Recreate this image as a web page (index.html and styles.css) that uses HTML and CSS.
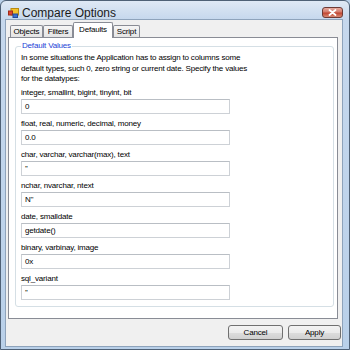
FILE: index.html
```html
<!DOCTYPE html>
<html>
<head>
<meta charset="utf-8">
<link rel="stylesheet" href="styles.css">
</head>
<body>
<div class="window">
  <div class="titlebar">
    <svg class="appicon" width="11" height="10" viewBox="0 0 11 10">
      <rect x="3" y="0.5" width="7.5" height="6.5" fill="#f3c12a" stroke="#b98a10" stroke-width="1"/>
      <rect x="0.5" y="3" width="4" height="4" fill="#e0442c" stroke="#a02a18" stroke-width="1"/>
      <rect x="5" y="6" width="4.5" height="3.5" fill="#3b6fd1" stroke="#234a99" stroke-width="1"/>
    </svg>
    <span class="title">Compare Options</span>
    <span class="close">
      <svg width="9" height="7" viewBox="0 0 9 7"><path d="M1.5 1 L7.5 6 M7.5 1 L1.5 6" stroke="#fff" stroke-width="1.8" stroke-linecap="round"/></svg>
    </span>
  </div>
  <div class="client">
    <div class="tabs">
      <div class="tab w-objects">Objects</div>
      <div class="tab w-filters">Filters</div>
      <div class="tab active w-defaults">Defaults</div>
      <div class="tab w-script">Script</div>
    </div>
    <div class="panel">
      <fieldset class="group">
        <legend>Default Values</legend>
        <p class="desc">In some situations the Application has to assign to columns some<br>default types, such 0, zero string or current date. Specify the values<br>for the datatypes:</p>
        <div class="field"><div class="label">integer, smallint, bigint, tinyint, bit</div><div class="input">0</div></div>
        <div class="field"><div class="label">float, real, numeric, decimal, money</div><div class="input">0.0</div></div>
        <div class="field"><div class="label">char, varchar, varchar(max), text</div><div class="input">''</div></div>
        <div class="field"><div class="label">nchar, nvarchar, ntext</div><div class="input">N''</div></div>
        <div class="field"><div class="label">date, smalldate</div><div class="input">getdate()</div></div>
        <div class="field"><div class="label">binary, varbinay, image</div><div class="input">0x</div></div>
        <div class="field"><div class="label">sql_variant</div><div class="input">''</div></div>
      </fieldset>
    </div>
    <div class="buttons">
      <button class="btn w-cancel">Cancel</button>
      <button class="btn w-apply">Apply</button>
    </div>
  </div>
</div>
</body>
</html>
```
FILE: styles.css
```css
* { box-sizing: border-box; }
html, body { margin: 0; padding: 0; width: 350px; height: 350px; overflow: hidden; }
body {
  font-family: "Liberation Sans", Arial, sans-serif;
  font-size: 8px;
  letter-spacing: -0.18px;
  color: #000;
  background: #b9d0e9;
}
.window {
  width: 350px;
  height: 350px;
  border: 1px solid #4f6176;
  border-radius: 6px 6px 0 0;
  background: linear-gradient(#dfe9f5 0, #c6d8ed 18px, #b9d0e9 100%);
  padding: 0 6px 2px 4px;
  display: flex;
  flex-direction: column;
}
.titlebar {
  height: 18px;
  display: flex;
  align-items: flex-start;
  flex: none;
}
.appicon { margin: 7px 0 0 3px; flex: none; }
.title {
  margin: 5px 0 0 3px;
  font-size: 12px;
  line-height: 14px;
  letter-spacing: 0;
  color: #1b1b1b;
}
.close {
  margin: 6px 0 0 auto;
  width: 21px;
  height: 11px;
  border: 1px solid #6d3a35;
  border-radius: 3px;
  background: linear-gradient(#e6a99e 0, #d37a6a 45%, #c0432f 55%, #d88a75 100%);
  display: flex;
  align-items: center;
  justify-content: center;
}
.close svg { display: block; }
.client {
  flex: 1;
  background: #f0f0f0;
  border: 1px solid #8ea3bb;
  display: flex;
  flex-direction: column;
  padding: 2px 1px 0 2px;
}
.tabs {
  display: flex;
  align-items: flex-end;
  height: 16px;
  padding-left: 2px;
  margin-bottom: -1px;
  position: relative;
  z-index: 1;
  flex: none;
}
.tab {
  height: 12px;
  margin-bottom: 1px;
  border: 1px solid #898c95;
  border-bottom: none;
  border-radius: 2px 2px 0 0;
  background: linear-gradient(#f6f6f6, #e4e4e4);
  display: flex;
  align-items: center;
  justify-content: center;
  line-height: 10px;
}
.tab.active {
  height: 16px;
  margin-bottom: 0;
  background: #fff;
  padding-bottom: 2px;
}
.w-objects { width: 33px; }
.w-filters { width: 30px; }
.w-defaults { width: 40px; }
.w-script { width: 27px; }
.panel {
  flex: none;
  background: #fff;
  border: 1px solid #898c95;
  margin-right: 3px;
  padding: 3px 3px 11px 6px;
}
.group {
  margin: 0;
  border: 1px solid #d5dfe5;
  border-radius: 3px;
  padding: 0 5px 6px 5px;
  min-width: 0;
}
.group legend {
  color: #1c3fd6;
  line-height: 10px;
  padding: 0 1px;
  margin-left: 0;
}
.desc {
  margin: 2px 0 3px;
  line-height: 10.5px;
}
.field { margin-top: 5px; }
.desc + .field { margin-top: 0; }
.label { line-height: 10px; }
.input {
  margin-top: 1px;
  width: 209px;
  height: 15px;
  border: 1px solid #cdd1d6;
  border-top-color: #b9bec4;
  padding-left: 3px;
  line-height: 13px;
  background: #fff;
}
.buttons {
  display: flex;
  justify-content: flex-end;
  gap: 5px;
  margin-top: 6px;
  flex: none;
}
.btn {
  height: 15px;
  padding: 0;
  border: 1px solid #707070;
  border-radius: 3px;
  background: linear-gradient(#f3f3f3 0, #ebebeb 50%, #dddddd 51%, #d0d0d0 100%);
  font-family: inherit;
  font-size: 8px;
  letter-spacing: -0.18px;
  color: #000;
  line-height: 13px;
}
.w-cancel { width: 55px; }
.w-apply { width: 53px; }
```
